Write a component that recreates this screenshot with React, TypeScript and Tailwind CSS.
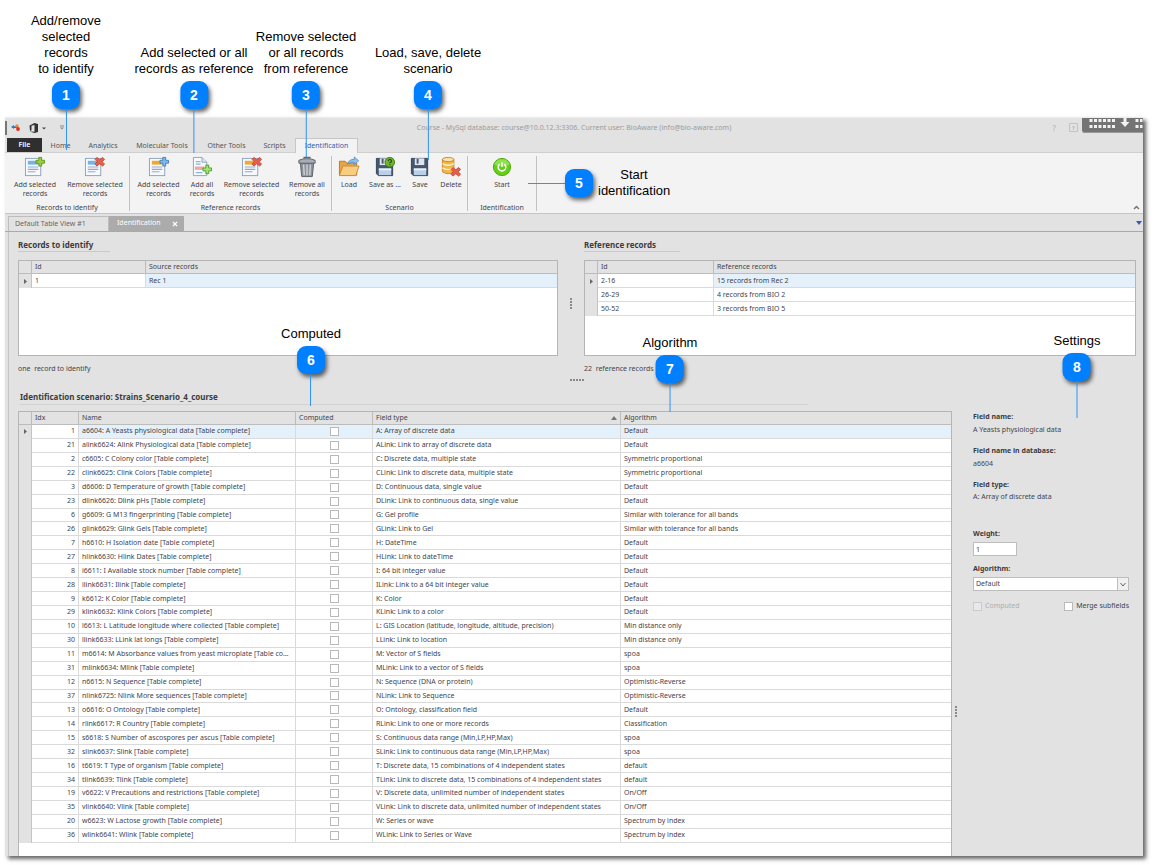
import type { ReactNode } from "react";
import clsx from "clsx";

type FieldRow = [idx: number, name: string, type: string, algorithm: string];

const fields: FieldRow[] = [
  [1, "a6604: A Yeasts physiological data [Table complete]", "A: Array of discrete data", "Default"],
  [21, "alink6624: Alink Physiological data [Table complete]", "ALink: Link to array of discrete data", "Default"],
  [2, "c6605: C Colony color [Table complete]", "C: Discrete data, multiple state", "Symmetric proportional"],
  [22, "clink6625: Clink Colors [Table complete]", "CLink: Link to discrete data, multiple state", "Symmetric proportional"],
  [3, "d6606: D Temperature of growth [Table complete]", "D: Continuous data, single value", "Default"],
  [23, "dlink6626: Dlink pHs [Table complete]", "DLink: Link to continuous data, single value", "Default"],
  [6, "g6609: G M13 fingerprinting [Table complete]", "G: Gel profile", "Similar with tolerance for all bands"],
  [26, "glink6629: Glink Gels [Table complete]", "GLink: Link to Gel", "Similar with tolerance for all bands"],
  [7, "h6610: H Isolation date [Table complete]", "H: DateTime", "Default"],
  [27, "hlink6630: Hlink Dates [Table complete]", "HLink: Link to dateTime", "Default"],
  [8, "i6611: I Available stock number [Table complete]", "I: 64 bit integer value", "Default"],
  [28, "ilink6631: Ilink [Table complete]", "ILink: Link to a 64 bit integer value", "Default"],
  [9, "k6612: K Color [Table complete]", "K: Color", "Default"],
  [29, "klink6632: Klink Colors [Table complete]", "KLink: Link to a color", "Default"],
  [10, "l6613: L Latitude longitude where collected [Table complete]", "L: GIS Location (latitude, longitude, altitude, precision)", "Min distance only"],
  [30, "llink6633: LLink lat longs [Table complete]", "LLink: Link to location", "Min distance only"],
  [11, "m6614: M Absorbance values from yeast microplate [Table complete]", "M: Vector of S fields", "spoa"],
  [31, "mlink6634: Mlink [Table complete]", "MLink: Link to a vector of S fields", "spoa"],
  [12, "n6615: N Sequence [Table complete]", "N: Sequence (DNA or protein)", "Optimistic-Reverse"],
  [37, "nlink6725: Nlink More sequences [Table complete]", "NLink: Link to Sequence", "Optimistic-Reverse"],
  [13, "o6616: O Ontology [Table complete]", "O: Ontology, classification field", "Default"],
  [14, "rlink6617: R Country [Table complete]", "RLink: Link to one or more records", "Classification"],
  [15, "s6618: S Number of ascospores per ascus [Table complete]", "S: Continuous data range (Min,LP,HP,Max)", "spoa"],
  [32, "slink6637: Slink [Table complete]", "SLink: Link to continuous data range (Min,LP,HP,Max)", "spoa"],
  [16, "t6619: T Type of organism [Table complete]", "T: Discrete data, 15 combinations of 4 independent states", "default"],
  [34, "tlink6639: Tlink [Table complete]", "TLink: Link to discrete data, 15 combinations of 4 independent states", "default"],
  [19, "v6622: V Precautions and restrictions [Table complete]", "V: Discrete data, unlimited number of independent states", "On/Off"],
  [35, "vlink6640: Vlink [Table complete]", "VLink: Link to discrete data, unlimited number of independent states", "On/Off"],
  [20, "w6623: W Lactose growth [Table complete]", "W: Series or wave", "Spectrum by index"],
  [36, "wlink6641: Wlink [Table complete]", "WLink: Link to Series or Wave", "Spectrum by index"],
];

const callouts = [
  { n: 1, lines: ["Add/remove", "selected", "records", "to identify"], place: "left-[66px] top-[13px]", stem: "h-[41px]" },
  { n: 2, lines: ["Add selected or all", "records as reference"], place: "left-[194px] top-[45px]", stem: "h-[44px]" },
  { n: 3, lines: ["Remove selected", "or all records", "from reference"], place: "left-[306px] top-[29px]", stem: "h-[48px]" },
  { n: 4, lines: ["Load, save, delete", "scenario"], place: "left-[428px] top-[45px]", stem: "h-[51px]" },
  { n: 6, lines: ["Computed"], place: "left-[311px] top-[326px]", stem: "h-[32px]" },
  { n: 7, lines: ["Algorithm"], place: "left-[670px] top-[335px]", stem: "h-[29px]" },
  { n: 8, lines: ["Settings"], place: "left-[1077px] top-[333px]", stem: "h-[37px]" },
];

function Sheet({ bar }: { bar: string }) {
  return (
    <>
      <rect x="1.5" y="2.5" width="16" height="18" fill="#f6f9fd" stroke="#8ea3bd" />
      <rect x="4" y="5" width="11" height="4" fill={bar} />
      <path d="M4 11.5h11M4 14h11M4 16.5h8" stroke="#93a9cc" strokeWidth="1.2" />
    </>
  );
}

function PlusMark({ fill, stroke, y = 0 }: { fill: string; stroke: string; y?: number }) {
  return (
    <path
      d={`M15.5 ${y + 1.5}h3v3h3v3h-3v3h-3v-3h-3v-3h3z`}
      fill={fill}
      stroke={stroke}
      strokeWidth="0.9"
    />
  );
}

function CrossMark({ y = 0 }: { y?: number }) {
  return (
    <path
      transform={`translate(0 ${y})`}
      d="M13.5 1.5l3 2.5 3-2.5 2 2-2.500 2.500 2.500 2.500-2 2-3-2.500-3 2.500-2-2 2.500-2.500-2.500-2.500z"
      fill="#e8604c"
      stroke="#b93526"
      strokeWidth="0.8"
    />
  );
}

function Floppy() {
  return (
    <>
      <path d="M2.500 2.500h17v18h-15l-2-2z" fill="#46566d" stroke="#35435a" />
      <path d="M6 2.500h10v7H6z" fill="#dfe5ee" />
      <path d="M8 3h2v5H8z" fill="#46566d" />
      <path d="M5 13h13v7H5z" fill="#b9d0ea" />
      <path d="M5 13h13v2H5z" fill="#e9f1fa" />
    </>
  );
}

function Icon({ children }: { children: ReactNode }) {
  return (
    <svg viewBox="0 0 23 23" className="size-[22px]" aria-hidden="true">
      {children}
    </svg>
  );
}

const icons = {
  addSelected: <Icon><Sheet bar="#74b3e6" /><PlusMark fill="#9bd03c" stroke="#5b8f1c" /></Icon>,
  removeSelected: <Icon><Sheet bar="#74b3e6" /><CrossMark /></Icon>,
  addReference: <Icon><Sheet bar="#f0a92c" /><PlusMark fill="#7db9ec" stroke="#3f79b5" /></Icon>,
  addAll: (
    <Icon>
      <path d="M2.500 1.500h9l5 5v14h-14z" fill="#f6f9fd" stroke="#8ea3bd" />
      <path d="M11.500 1.500v5h5" fill="#dde7f3" stroke="#8ea3bd" />
      <path d="M5 6h5M5 8.500h5M5 17.500h7" stroke="#8fb2dc" strokeWidth="1.3" />
      <path d="M4 11h10v3.500H4z" fill="#f3a4a4" />
      <PlusMark fill="#a9e36c" stroke="#3f9a2f" y={8} />
    </Icon>
  ),
  removeReference: <Icon><Sheet bar="#f0a92c" /><CrossMark /></Icon>,
  removeAll: (
    <Icon>
      <path d="M8.500 3V1.500h6V3" fill="none" stroke="#666b73" strokeWidth="1.4" />
      <path d="M4.500 7h14l-1.500 14.500h-11z" fill="#8d939c" stroke="#5b6068" />
      <path d="M3 4.500q8.500-3.500 17 0v3H3z" fill="#a9aeb6" stroke="#5b6068" />
      <path d="M8 9l.6 11M11.500 9v11M15 9l-.6 11" stroke="#d5d8dd" strokeWidth="1.3" />
    </Icon>
  ),
  load: (
    <Icon>
      <path d="M1.500 20V5.500h6l2 2h10V20z" fill="#e3a548" stroke="#b9792a" />
      <path d="M1.500 20.500l3.500-10h17l-3.500 10z" fill="#f9cd80" stroke="#c98b35" />
      <path d="M10 8.500q1-5 7-5V1l4.500 4-4.500 4V6.500q-4-.5-7 2z" fill="#8dc1ee" stroke="#4a86bf" strokeWidth="0.8" />
    </Icon>
  ),
  saveAs: (
    <Icon>
      <Floppy />
      <circle cx="16.500" cy="6.500" r="5" fill="#6db52c" stroke="#3f7d12" />
      <path d="M14.800 5.300q.2-1.700 1.800-1.700 1.700 0 1.700 1.500 0 1-1.700 1.900v.7M16.600 8.600v1.100" fill="none" stroke="#1f3d0b" strokeWidth="1.1" />
    </Icon>
  ),
  save: <Icon><Floppy /></Icon>,
  remove: (
    <Icon>
      <path d="M2.500 3.500v13q6 4 12 0v-13z" fill="#f4b547" stroke="#c9872a" />
      <ellipse cx="8.500" cy="3.700" rx="6" ry="2.200" fill="#fbe3a8" stroke="#c9872a" />
      <path d="M2.500 8q6 3.500 12 0M2.500 12.500q6 3.500 12 0" fill="none" stroke="#fff3d0" strokeWidth="1.500" />
      <CrossMark y={10.5} />
    </Icon>
  ),
  start: (
    <Icon>
      <circle cx="11.500" cy="11.500" r="9" fill="#63cf17" stroke="#4aa80f" />
      <path d="M3.500 9a8.500 8.500 0 0 1 16 0q-8 4-16 0z" fill="#8ee04c" />
      <path d="M9 8.500a4 4 0 1 0 5 0M11.500 6.500v5" fill="none" stroke="#fff" strokeWidth="1.500" />
    </Icon>
  ),
};

const ribbon = [
  {
    title: "Records to identify",
    width: "w-[125px]",
    items: [
      { label: "Add selected records", icon: icons.addSelected, width: "w-[60px]" },
      { label: "Remove selected records", icon: icons.removeSelected, width: "w-[60px]" },
    ],
  },
  {
    title: "Reference records",
    width: "w-[202px]",
    items: [
      { label: "Add selected records", icon: icons.addReference, width: "w-[57px]" },
      { label: "Add all records", icon: icons.addAll, width: "w-[30px]" },
      { label: "Remove selected records", icon: icons.removeReference, width: "w-[69px]" },
      { label: "Remove all records", icon: icons.removeAll, width: "w-[42px]" },
    ],
  },
  {
    title: "Scenario",
    width: "w-[136px]",
    items: [
      { label: "Load", icon: icons.load, width: "w-[34px]" },
      { label: "Save as ...", icon: icons.saveAs, width: "w-[38px]" },
      { label: "Save", icon: icons.save, width: "w-[32px]" },
      { label: "Delete", icon: icons.remove, width: "w-[30px]" },
    ],
  },
  {
    title: "Identification",
    width: "w-[69px]",
    items: [{ label: "Start", icon: icons.start, width: "w-[68px]" }],
  },
];

function Badge({ n }: { n: number }) {
  return (
    <span className="flex size-7 shrink-0 items-center justify-center rounded-[9px] bg-[#0080ff] text-[14px] font-bold text-white shadow-[2px_3px_4px_rgba(0,0,0,0.6)]">
      {n}
    </span>
  );
}

function TitleBar() {
  return (
    <div className="flex h-[20px] items-center">
      <div className="flex flex-1 items-center">
        <span className="h-[14px] w-[2px] bg-[#777]" />
        <svg viewBox="0 0 60 12" className="ml-1 h-[12px] w-[60px]" aria-hidden="true">
          <path d="M0 5l3-2v1.200h3v1.800H3v1z" fill="#2c77c4" />
          <circle cx="6" cy="4" r="1.700" fill="#f0823a" />
          <circle cx="7" cy="7" r="1.900" fill="#e22b22" />
          <path d="M18.500 3.500l5-2.500 3.500 1v8l-3.500 1-5-1.500 5 .3V3l-3 .8v4.500l-1.500.8z" fill="#333" />
          <path d="M31 5.500h4l-2 2z" fill="#444" />
          <path d="M49 4h4" stroke="#888" />
          <path d="M49 5.500h4l-2 2z" fill="#888" />
        </svg>
      </div>
      <h1 className="text-[7px] text-[#9b9b9b]">
        Course - MySql database: course@10.0.12.3:3306. Current user: BioAware (info@bio-aware.com)
      </h1>
      <div className="flex flex-1 items-start justify-end self-stretch">
        <span className="mt-[4px] text-[8px] font-bold leading-[11px] text-[#c2c2c2]">?</span>
        <svg viewBox="0 0 9 9" className="ml-[13px] mt-[5px] size-[9px]" fill="none" stroke="#c2c2c2" aria-hidden="true">
          <path d="M.5.5h8v8h-8zM4.500 7V3M3 4.500L4.500 3 6 4.500" />
        </svg>
        <svg viewBox="0 0 61 16" className="ml-1 h-[16px] w-[61px]" aria-hidden="true">
          <path d="M0 0h61v15H3q-3 0-3-3z" fill="#747474" />
          <path d="M1 13.500q1 1 3 1h57" stroke="#9a9a9a" fill="none" />
          <path d="M7.500 2.500h26M7.500 8.500h26M53.500 2.500h7M53.500 8.500h7" stroke="#f2f2f2" strokeWidth="3" strokeDasharray="3 1.500" />
          <path d="M41.500 0h3v4h3l-4.500 5-4.500-5h3z" fill="#f2f2f2" />
        </svg>
      </div>
    </div>
  );
}

function RibbonTabs() {
  const tab = "h-full pt-[2px] text-center text-[#555]";
  return (
    <nav className="flex h-[15px] items-stretch border-b border-[#cfcfcf] pl-[2px]">
      <button type="button" className="w-[35px] bg-[#2f2f2f] font-semibold text-white">File</button>
      <button type="button" className={clsx(tab, "w-[37px]")}>Home</button>
      <button type="button" className={clsx(tab, "w-[48px]")}>Analytics</button>
      <button type="button" className={clsx(tab, "w-[70px]")}>Molecular Tools</button>
      <button type="button" className={clsx(tab, "w-[59px]")}>Other Tools</button>
      <button type="button" className={clsx(tab, "w-[37px]")}>Scripts</button>
      <button
        type="button"
        className="-mb-px ml-[2px] w-[63px] border border-b-0 border-[#c6c6c6] bg-[#f3f3f3] text-[#3560a8]"
      >
        Identification
      </button>
    </nav>
  );
}

function Ribbon() {
  return (
    <div className="flex h-[61px] items-start border-b border-[#c6c6c6] bg-[#f3f3f3]">
      {ribbon.map((group) => (
        <section
          key={group.title}
          className={clsx("mt-[3px] flex h-[55px] shrink-0 flex-col justify-between border-r border-[#c2c2c2]", group.width)}
        >
          <div className="flex">
            {group.items.map((item, i) => (
              <button
                key={i}
                type="button"
                className={clsx("flex shrink-0 flex-col items-center gap-[2px] leading-[9px]", item.width)}
              >
                {item.icon}
                {item.label}
              </button>
            ))}
          </div>
          <p className="text-center leading-[7px]">{group.title}</p>
        </section>
      ))}
      <svg viewBox="0 0 7 5" className="mb-[3px] ml-auto mr-[3px] h-[5px] w-[7px] self-end" fill="none" stroke="#777" strokeWidth="1.500" aria-hidden="true">
        <path d="M1 4l2.500-2.500L6 4" />
      </svg>
    </div>
  );
}

function DocumentTabs() {
  return (
    <div className="flex h-[18px] items-end border-b border-[#a9a9a9] pl-[3px] pt-[2px]">
      <button type="button" className="h-full w-[101px] border border-b-0 border-[#bdbdbd] pl-[6px] text-left text-[#666]">
        Default Table View #1
      </button>
      <button type="button" className="flex h-full w-[75px] items-center justify-between bg-[#ababab] pl-2 pr-[6px] text-white">
        Identification
        <svg viewBox="0 0 7 7" className="size-[6px]" stroke="#fff" strokeWidth="1.500" aria-hidden="true">
          <path d="M1 1l5 5M6 1L1 6" />
        </svg>
      </button>
      <svg viewBox="0 0 6 4" className="mb-[6px] ml-auto mr-[1px] h-[4px] w-[6px]" aria-hidden="true">
        <path d="M0 0h6L3 4z" fill="#2f5fb0" />
      </svg>
    </div>
  );
}

const th = "h-[13px] truncate border-b border-r border-[#bcbcbc] px-[3px] text-left font-normal";
const td = "h-[14px] truncate border-b border-r border-[#dadada] px-[3px]";
const scenarioCell = "truncate border-b border-r border-[#dadada] px-[3px]";
const marker = "border-r border-[#c4c4c4] bg-[#e2e2e2] align-middle";

function RowMarker() {
  return (
    <svg viewBox="0 0 3 5" className="mx-auto h-[5px] w-[3px]" aria-hidden="true">
      <path d="M0 0l3 2.500L0 5z" fill="#666" />
    </svg>
  );
}

type RecordPanelProps = { title: string; heading: string; idWidth: string; rows: string[][]; footer: string; rule: string };

function RecordPanel({ title, heading, idWidth, rows, footer, rule }: RecordPanelProps) {
  return (
    <section>
      <h2 className={clsx("border-b border-[#c9c9c9] text-[8px] font-bold leading-[13px] text-[#3c3c3c]", rule)}>{title}</h2>
      <div className="mt-2 h-[96px] border border-[#b5b5b5] bg-white">
        <table className="w-full table-fixed border-separate border-spacing-0 leading-[12px]">
          <colgroup>
            <col className="w-[13px]" />
            <col className={idWidth} />
            <col />
          </colgroup>
          <thead className="bg-[#e2e2e2]">
            <tr>
              <th className={th} aria-label="Current row" />
              <th className={th}>Id</th>
              <th className={clsx(th, "border-r-0")}>{heading}</th>
            </tr>
          </thead>
          <tbody>
            {rows.map(([id, text], i) => (
              <tr key={id}>
                <td className={marker}>{i === 0 && <RowMarker />}</td>
                <td className={td}>{id}</td>
                <td className={clsx(td, "border-r-0", i === 0 && "bg-[#e4f0fa]")}>{text}</td>
              </tr>
            ))}
          </tbody>
        </table>
      </div>
      <p className="mt-2 whitespace-pre leading-[10px]">{footer}</p>
    </section>
  );
}

function Dots({ vertical = false }: { vertical?: boolean }) {
  return vertical ? (
    <svg viewBox="0 0 2 11" className="h-[11px] w-[2px]" aria-hidden="true">
      <path d="M1 0v11" stroke="#8a8a8a" strokeWidth="2" strokeDasharray="2 1" />
    </svg>
  ) : (
    <svg viewBox="0 0 14 2" className="h-[2px] w-[14px]" aria-hidden="true">
      <path d="M0 1h14" stroke="#8a8a8a" strokeWidth="2" strokeDasharray="2 1" />
    </svg>
  );
}

function ScenarioTable() {
  return (
    <div className="min-w-0 flex-1 border border-b-0 border-[#b5b5b5] bg-white pb-[13px]">
      <table className="h-[431px] w-full table-fixed border-separate border-spacing-0 leading-[12px]">
        <colgroup>
          <col className="w-[13px]" />
          <col className="w-[47px]" />
          <col className="w-[217px]" />
          <col className="w-[77px]" />
          <col className="w-[248px]" />
          <col />
        </colgroup>
        <thead className="bg-[#e2e2e2]">
          <tr>
            <th className={th} aria-label="Current row" />
            <th className={th}>Idx</th>
            <th className={th}>Name</th>
            <th className={th}>Computed</th>
            <th className={th}>
              <span className="flex items-center justify-between">
                Field type
                <svg viewBox="0 0 6 4" className="h-[4px] w-[6px]" aria-hidden="true">
                  <path d="M0 4h6L3 0z" fill="#777" />
                </svg>
              </span>
            </th>
            <th className={clsx(th, "border-r-0")}>Algorithm</th>
          </tr>
        </thead>
        <tbody>
          {fields.map(([idx, name, type, algorithm], i) => {
            const cell = clsx(scenarioCell, i === 0 && "bg-[#e4f0fa]");
            return (
              <tr key={idx}>
                <td className={marker}>{i === 0 && <RowMarker />}</td>
                <td className={clsx(scenarioCell, "text-right")}>{idx}</td>
                <td className={cell}>{name}</td>
                <td className={cell}>
                  <input
                    type="checkbox"
                    aria-label={`Computed ${name}`}
                    className="mx-auto block size-[9px] appearance-none border border-[#b9b9b9] bg-white"
                  />
                </td>
                <td className={cell}>{type}</td>
                <td className={clsx(cell, "border-r-0")}>{algorithm}</td>
              </tr>
            );
          })}
        </tbody>
      </table>
    </div>
  );
}

function Settings() {
  const term = "font-bold text-[#3c3c3c]";
  return (
    <aside className="w-[183px] pl-[13px] pr-[7px] pt-[1px] leading-[10px]">
      <dl>
        <dt className={term}>Field name:</dt>
        <dd className="mt-[3px]">A Yeasts physiological data</dd>
        <dt className={clsx(term, "mt-[11px]")}>Field name in database:</dt>
        <dd className="mt-[3px]">a6604</dd>
        <dt className={clsx(term, "mt-[11px]")}>Field type:</dt>
        <dd className="mt-[2px]">A: Array of discrete data</dd>
      </dl>
      <label htmlFor="weight" className={clsx(term, "mt-[27px] block")}>Weight:</label>
      <input
        id="weight"
        defaultValue="1"
        className="mt-[3px] block h-[14px] w-[44px] border border-[#bdbdbd] bg-white px-[2px]"
      />
      <label htmlFor="algorithm" className={clsx(term, "mt-[8px] block")}>Algorithm:</label>
      <div className="relative mt-[3px] w-[156px]">
        <select
          id="algorithm"
          className="block h-[14px] w-full appearance-none border border-[#bdbdbd] bg-white px-[2px]"
        >
          <option>Default</option>
        </select>
        <span className="pointer-events-none absolute inset-y-0 right-0 flex w-[12px] items-center justify-center border border-[#bdbdbd] bg-[#f0f0f0]">
          <svg viewBox="0 0 6 5" className="h-[5px] w-[6px]" fill="none" stroke="#666" aria-hidden="true">
            <path d="M.5 1L3 4l2.500-3" />
          </svg>
        </span>
      </div>
      <div className="mt-[10px] flex w-[156px] justify-between">
        <label className="flex items-center gap-[3px] text-[#adadad]">
          <input type="checkbox" disabled className="size-[9px] appearance-none border border-[#cbcbcb] bg-[#e8e8e8]" />
          Computed
        </label>
        <label className="flex items-center gap-[3px]">
          <input type="checkbox" className="size-[9px] appearance-none border border-[#b9b9b9] bg-white" />
          Merge subfields
        </label>
      </div>
    </aside>
  );
}

export default function App() {
  return (
    <main className="relative bg-white pb-[9px] pl-[5px] pr-[14px] pt-[117px] font-['Noto_Sans',sans-serif] text-[7px] text-[#44444c]">
      <div className="border-t border-[#ededed] bg-[#e2e2e2] shadow-[3px_3px_4px_rgba(0,0,0,0.6)]">
        <TitleBar />
        <RibbonTabs />
        <Ribbon />
        <DocumentTabs />
        <div className="ml-[3px] border-l border-[#c4c4c4] pl-[9px] pt-[6px]">
          <div className="grid grid-cols-[minmax(0,540fr)_26px_minmax(0,552fr)] pr-[7px]">
            <RecordPanel
              title="Records to identify"
              heading="Source records"
              idWidth="w-[114px]"
              rule="w-[92px]"
              rows={[["1", "Rec 1"]]}
              footer="one  record to identify"
            />
            <div className="flex items-center justify-center pb-[6px]">
              <Dots vertical />
            </div>
            <RecordPanel
              title="Reference records"
              heading="Reference records"
              idWidth="w-[116px]"
              rule="w-[96px]"
              rows={[
                ["2-16", "15 records from Rec 2"],
                ["26-29", "4 records from BIO 2"],
                ["50-52", "3 records from BIO 5"],
              ]}
              footer="22  reference records"
            />
          </div>
          <div className="mt-[5px] flex justify-center pr-[8px]">
            <Dots />
          </div>
          <h2 className="ml-[2px] mt-[9px] w-[70%] border-b border-[#d2d2d2] text-[8px] font-bold leading-[14px] text-[#3c3c3c]">
            Identification scenario: Strains_Scenario_4_course
          </h2>
          <div className="mt-[6px] flex">
            <ScenarioTable />
            <div className="flex w-[8px] items-center justify-center pt-[156px]">
              <Dots vertical />
            </div>
            <Settings />
          </div>
        </div>
      </div>

      <div className="font-['Liberation_Sans',sans-serif] text-[13px] leading-4 text-black">
        {callouts.map((callout) => (
          <div
            key={callout.n}
            className={clsx("absolute flex -translate-x-1/2 flex-col items-center whitespace-nowrap text-center", callout.place)}
          >
            {callout.lines.map((line) => (
              <span key={line}>{line}</span>
            ))}
            <span className="mt-[4px]">
              <Badge n={callout.n} />
            </span>
            <span className={clsx("w-px bg-[#2f93f8]", callout.stem)} />
          </div>
        ))}
        <div className="absolute left-[528px] top-[167px] flex items-center text-center">
          <span className="h-px w-[37px] bg-[#2f93f8]" />
          <Badge n={5} />
          <span className="ml-[5px] w-[72px]">Start identification</span>
        </div>
      </div>
    </main>
  );
}
